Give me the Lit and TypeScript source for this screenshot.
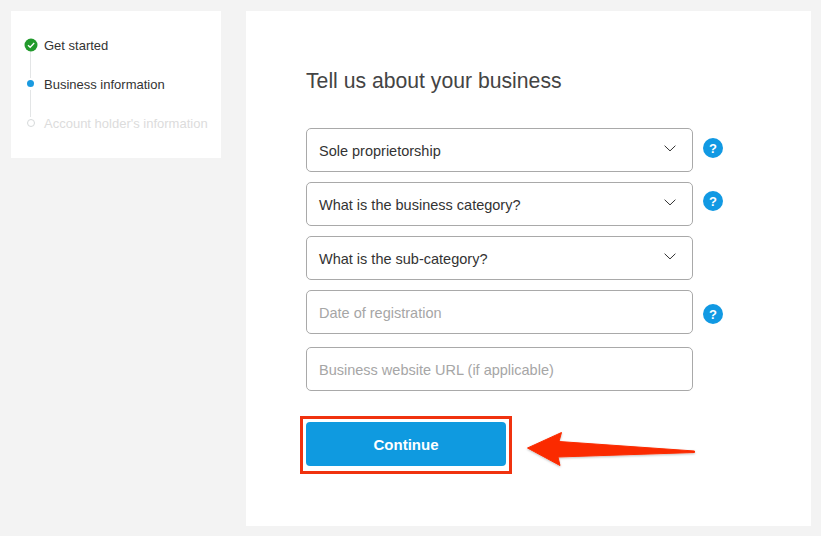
import { LitElement, html, css, svg } from "lit";
import { customElement } from "lit/decorators.js";

const chevron = html`<svg class="chev" width="12" height="7" viewBox="0 0 12 7"><path d="M.6.7l5.4 5.2L11.4.7" fill="none" stroke="#333" stroke-width="1"/></svg>`;

@customElement("app-root")
export class AppRoot extends LitElement {
  static styles = css`
    :host { display: block; width: 821px; height: 536px; background: #f3f3f3; overflow: hidden;
      font-family: "Liberation Sans", Arial, sans-serif; color: #333; }
    .page { display: flex; align-items: flex-start; gap: 25px; padding: 11px 10px 10px 11px; box-sizing: border-box; height: 536px; }
    .side { width: 210px; height: 147px; background: #fff; box-sizing: border-box; padding: 14px 0 0 12.5px; flex: none; }
    .step { display: flex; align-items: center; gap: 6.5px; height: 39px; font-size: 13px; color: #333; white-space: nowrap; position: relative; }
    .step > span:last-child { padding-top: 1px; }
    .step.off { color: #dcdcdc; }
    .mark { width: 14px; height: 14px; flex: none; display: flex; align-items: center; justify-content: center; position: relative; z-index: 1; }
    .step:not(:last-child)::after { content: ""; position: absolute; left: 6.5px; top: 26px; width: 1px; height: 27px; background: #e3e5e6; }
    .dot { width: 7.5px; height: 7.5px; border-radius: 50%; background: #1a9ae0; }
    .ring { width: 6px; height: 6px; border-radius: 50%; border: 1.5px solid #d6d9da; background: #fff; }
    .main { width: 565px; height: 515px; background: #fff; box-sizing: border-box; padding: 57px 0 0 60px; flex: none; position: relative; }
    h1 { margin: 0 0 34px; font-weight: 400; font-size: 21.2px; line-height: 26px; color: #444; }
    .fields { display: flex; flex-direction: column; }
    .row { display: flex; align-items: center; gap: 10px; height: 44px; margin-bottom: 10px; }
    .row.last { margin-top: 3px; margin-bottom: 31px; }
    .field { width: 387px; height: 44px; box-sizing: border-box; border: 1px solid #a9a9a9; border-radius: 5px; display: flex; align-items: center; justify-content: space-between; padding: 0 16px 0 12px; font-size: 14.5px; color: #333; }
    .field > span { padding-top: 1px; }
    .field.ph { color: #a6a6a6; }
    .chev { margin-top: -4px; }
    .help { width: 20px; height: 20px; border-radius: 50%; background: #1199e3; color: #fff; font-size: 13px; font-weight: 700; display: flex; align-items: center; justify-content: center; }
    .help.a { margin-top: -4px; }
    .help.b { margin-top: -6px; }
    .help.c { margin-top: 4px; }
    .btn { width: 200px; height: 44px; background: #0f9ae0; color: #fff; border: 0; border-radius: 4px; font: 700 15px "Liberation Sans", Arial, sans-serif; display: block; padding: 0; }
    .box { position: absolute; left: 54px; top: 405px; width: 212px; height: 58px; box-sizing: border-box; border: 3px solid #f0320f; }
    .arrow { position: absolute; left: 279px; top: 419px; }
  `;

  private field(text: string, opts: { ph?: boolean; sel?: boolean; help?: string; last?: boolean }) {
    return html`<div class="row ${opts.last ? "last" : ""}">
      <div class="field ${opts.ph ? "ph" : ""}"><span>${text}</span>${opts.sel ? chevron : ""}</div>
      ${opts.help ? html`<div class="help ${opts.help}">?</div>` : ""}
    </div>`;
  }

  render() {
    return html`<div class="page">
      <aside class="side">
        <div class="step"><span class="mark"><svg width="14" height="14" viewBox="0 0 14 14"><circle cx="7" cy="7" r="6.5" fill="#229a2c"/><path d="M4 7.2l2.2 2.1L10.2 5" fill="none" stroke="#fff" stroke-width="1.3"/></svg></span><span>Get started</span></div>
        <div class="step"><span class="mark"><span class="dot"></span></span><span>Business information</span></div>
        <div class="step off"><span class="mark"><span class="ring"></span></span><span>Account holder's information</span></div>
      </aside>
      <main class="main">
        <h1>Tell us about your business</h1>
        <div class="fields">
          ${this.field("Sole proprietorship", { sel: true, help: "a" })}
          ${this.field("What is the business category?", { sel: true, help: "b" })}
          ${this.field("What is the sub-category?", { sel: true })}
          ${this.field("Date of registration", { ph: true, help: "c" })}
          ${this.field("Business website URL (if applicable)", { ph: true, last: true })}
        </div>
        <button class="btn">Continue</button>
        <div class="box"></div>
        <svg class="arrow" width="175" height="50" viewBox="0 0 175 50">${svg`<defs><filter id="s" x="-5%" y="-20%" width="110%" height="140%"><feDropShadow dx="0" dy="1" stdDeviation="0.8" flood-color="#000" flood-opacity=".25"/></filter></defs><path d="M2.5 18 L36.5 2.5 L34 11.5 L169.5 21 L169.5 22.5 L33 27 L35 35.5 Z" fill="#fb2c00" stroke="#fb2c00" stroke-width="1" stroke-linejoin="round" filter="url(#s)"/>`}</svg>
      </main>
    </div>`;
  }
}
